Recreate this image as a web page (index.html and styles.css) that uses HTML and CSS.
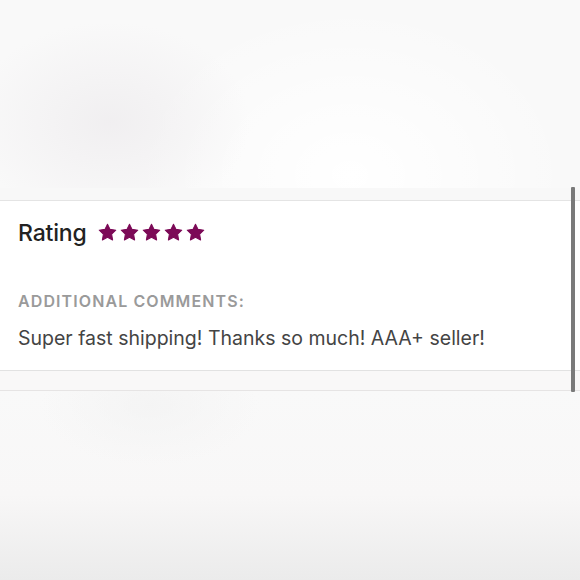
FILE: index.html
```html
<!DOCTYPE html>
<html>
<head>
<meta charset="utf-8">
<link rel="stylesheet" href="styles.css">
</head>
<body>
<div class="page">
  <div class="top-blur"></div>
  <div class="strip"></div>
  <section class="card">
    <div class="rating-row">
      <span class="rating-label">Rating</span>
      <span class="stars">
        <svg viewBox="0 0 24 24" class="star"><path d="M12 1.5L15.23 8.05L22.46 9.1L17.23 14.2L18.47 21.4L12 18L5.53 21.4L6.77 14.2L1.54 9.1L8.77 8.05Z"/></svg>
        <svg viewBox="0 0 24 24" class="star"><path d="M12 1.5L15.23 8.05L22.46 9.1L17.23 14.2L18.47 21.4L12 18L5.53 21.4L6.77 14.2L1.54 9.1L8.77 8.05Z"/></svg>
        <svg viewBox="0 0 24 24" class="star"><path d="M12 1.5L15.23 8.05L22.46 9.1L17.23 14.2L18.47 21.4L12 18L5.53 21.4L6.77 14.2L1.54 9.1L8.77 8.05Z"/></svg>
        <svg viewBox="0 0 24 24" class="star"><path d="M12 1.5L15.23 8.05L22.46 9.1L17.23 14.2L18.47 21.4L12 18L5.53 21.4L6.77 14.2L1.54 9.1L8.77 8.05Z"/></svg>
        <svg viewBox="0 0 24 24" class="star"><path d="M12 1.5L15.23 8.05L22.46 9.1L17.23 14.2L18.47 21.4L12 18L5.53 21.4L6.77 14.2L1.54 9.1L8.77 8.05Z"/></svg>
      </span>
    </div>
    <div class="comments-label">ADDITIONAL COMMENTS:</div>
    <div class="comment">Super fast shipping! Thanks so much! AAA+ seller!</div>
  </section>
  <div class="strip2"></div>
  <div class="bottom-blur"></div>
  <div class="scrollbar"></div>
</div>
</body>
</html>
```

FILE: styles.css
```css
html, body {
  margin: 0;
  padding: 0;
}
body {
  width: 580px;
  height: 580px;
  overflow: hidden;
  background: #f7f7f7;
  font-family: "Inter", "Lato", sans-serif;
}
.page {
  position: relative;
  width: 580px;
  height: 580px;
  display: flex;
  flex-direction: column;
}
.top-blur {
  height: 188px;
  background:
    radial-gradient(ellipse 140px 100px at 110px 122px, rgba(239,237,239,0.85), rgba(245,244,245,0) 100%),
    radial-gradient(ellipse 220px 170px at 350px 175px, #ffffff 0%, rgba(255,255,255,0) 100%),
    #f9f9f9;
}
.strip {
  height: 12px;
  background: #f8f8f8;
  border-bottom: 1px solid #e4e4e4;
}
.card {
  background: #ffffff;
  height: 170px;
  box-sizing: border-box;
  padding: 0 0 0 18px;
  border-bottom: 1px solid #e2e2e2;
}
.rating-row {
  display: flex;
  align-items: center;
  height: 30px;
  margin-top: 17px;
}
.rating-label {
  font-size: 23px;
  font-weight: 500;
  color: #222222;
  letter-spacing: -0.15px;
}
.stars {
  display: flex;
  gap: 3px;
  margin-left: 11px;
  margin-top: -2px;
}
.star {
  width: 19px;
  height: 19px;
  fill: #7c0a57;
  stroke: #7c0a57;
  stroke-width: 1.3;
  stroke-linejoin: round;
}
.comments-label {
  margin-top: 43px;
  font-size: 16px;
  font-weight: 600;
  color: #9a9a9a;
  letter-spacing: 1.1px;
  line-height: 20px;
}
.comment {
  margin-top: 15px;
  font-size: 19.5px;
  color: #444444;
  line-height: 24px;
}
.strip2 {
  height: 19px;
  background: #f9f8f8;
  border-bottom: 1px solid #e6e4e4;
}
.bottom-blur {
  flex: 1;
  background:
    radial-gradient(ellipse 110px 60px at 150px 15px, rgba(243,243,243,0.8), rgba(243,243,243,0)),
    linear-gradient(to bottom, #f9f9f9 0%, #f8f7f7 55%, #ebebeb 100%);
}
.scrollbar {
  position: absolute;
  left: 571px;
  top: 187px;
  width: 4px;
  height: 205px;
  background: #7a7a7a;
  border-radius: 1px;
}
```
